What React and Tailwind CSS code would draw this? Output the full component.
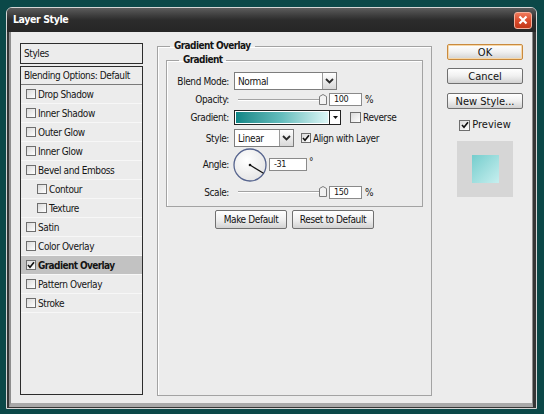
import React from "react";

const font = { fontFamily: '"DejaVu Sans Condensed", "DejaVu Sans", sans-serif' };

const CheckBox = ({ checked }) => (
  <span className="w-[10px] h-[10px] border border-[#6e6e6e] bg-gradient-to-br from-[#dadada] to-white flex items-center justify-center shrink-0">
    {checked && (
      <svg width="8" height="8" viewBox="0 0 8 8">
        <path d="M1 4 L3 6.3 L7 1.2" fill="none" stroke="#111" strokeWidth="1.6" />
      </svg>
    )}
  </span>
);

const Button = ({ children, primary, className = "" }) => (
  <div
    className={`h-[16px] flex items-center justify-center rounded-[2px] border bg-gradient-to-b from-white via-[#f0f0f0] to-[#d2d2d2] text-[10px] text-[#111] leading-none ${
      primary ? "border-[#c98a3e] shadow-[inset_0_0_0_1px_#f6d7a8]" : "border-[#707070]"
    } ${className}`}
  >
    {children}
  </div>
);

const Chevron = () => (
  <svg width="9" height="6" viewBox="0 0 9 6">
    <path d="M1 1 L4.5 4.5 L8 1" fill="none" stroke="#2a2a2a" strokeWidth="1.8" />
  </svg>
);

const Select = ({ value, width }) => (
  <div className={`h-[18px] ${width} flex border border-[#7d7d7d] bg-white`}>
    <span className="flex-1 pl-[3px] flex items-center text-[10px]">{value}</span>
    <span className="w-[14px] border-l border-[#9a9a9a] bg-gradient-to-b from-white to-[#d8d8d8] flex items-center justify-center">
      <Chevron />
    </span>
  </div>
);

// thin track with the small house-shaped thumb
const Slider = () => (
  <svg width="92" height="12" viewBox="0 0 92 12" className="shrink-0">
    <line x1="1" y1="5.5" x2="86" y2="5.5" stroke="#a2a2a2" />
    <line x1="1" y1="6.5" x2="86" y2="6.5" stroke="#ffffff" />
    <path d="M82.5 2.5 L86 0.5 L89.5 2.5 L89.5 10.5 L82.5 10.5 Z" fill="#f2f2f2" stroke="#7a7a7a" />
  </svg>
);

const NumberBox = ({ value, width = "w-[33px]" }) => (
  <span className={`h-[13px] ${width} border border-[#8a8a8a] bg-white flex items-center pl-[4px] text-[9px] leading-none`}>
    {value}
  </span>
);

const Label = ({ children }) => (
  <span className="w-[62px] text-right text-[10px] shrink-0 mr-[5px]">{children}</span>
);

const styleItems = [
  { name: "Drop Shadow" },
  { name: "Inner Shadow" },
  { name: "Outer Glow" },
  { name: "Inner Glow" },
  { name: "Bevel and Emboss" },
  { name: "Contour", sub: true },
  { name: "Texture", sub: true },
  { name: "Satin" },
  { name: "Color Overlay" },
  { name: "Gradient Overlay", active: true },
  { name: "Pattern Overlay" },
  { name: "Stroke" },
];

export default function App() {
  return (
    <div className="w-[544px] h-[414px] bg-[#0b4848] pt-[7px] pl-[6px] text-[#151515] tracking-[-0.4px]" style={font}>
      <div className="w-[531px] h-[402px] border border-[#d6d6d6] rounded-t-[6px] bg-[#363636] flex flex-col overflow-hidden">
        {/* title bar */}
        <div className="h-[24px] shrink-0 flex items-center justify-between pl-[6px] pr-[4px] bg-gradient-to-b from-[#5c5c5c] via-[#2c2c2c] to-[#262626]">
          <span className="text-white font-bold text-[10.5px]">Layer Style</span>
          <span className="w-[18px] h-[17px] rounded-[3px] border border-[#f3b09c] bg-gradient-to-b from-[#f0795a] via-[#d94b2c] to-[#c33818] flex items-center justify-center">
            <svg width="10" height="10" viewBox="0 0 10 10">
              <path d="M1.5 1.5 L8.5 8.5 M8.5 1.5 L1.5 8.5" stroke="#fff" strokeWidth="2.2" />
            </svg>
          </span>
        </div>

        {/* dialog body */}
        <div className="flex-1 ml-[2px] mr-[3px] mb-[1px] border-l-2 border-l-[#8e8e8e] border-r border-r-[#8a8a8a] border-b-4 border-b-[#a9a9a9] bg-[#ececec] flex pl-[9px] pt-[8px]">
          {/* styles list */}
          <div className="w-[123px] mt-[3px] flex flex-col shrink-0">
            <div className="h-[21px] border border-[#2c2c2c] flex items-center pl-[3px] text-[10px]">Styles</div>
            <div className="mt-[2px] h-[329px] border border-[#2c2c2c] flex flex-col">
              <div className="h-[18px] border-b border-[#7a7a7a] flex items-center pl-[3px] text-[10px] whitespace-nowrap">
                Blending Options: Default
              </div>
              {styleItems.map((item) => (
                <div
                  key={item.name}
                  className={`h-[19px] border-b border-[#f7f7f7] flex items-center gap-[2px] text-[10px] whitespace-nowrap ${
                    item.sub ? "pl-[16px]" : "pl-[5px]"
                  } ${item.active ? "bg-[#c2c2c2] font-bold tracking-[-0.6px]" : ""}`}
                >
                  <CheckBox checked={item.active} />
                  <span>{item.name}</span>
                </div>
              ))}
            </div>
          </div>

          {/* settings */}
          <fieldset className="ml-[14px] w-[275px] h-[356px] border border-[#a3a3a3] shadow-[inset_1px_1px_0_#fff] px-[8px] shrink-0">
            <legend className="ml-[4px] px-[4px] text-[10px] leading-[12px] font-bold tracking-[-0.6px]">Gradient Overlay</legend>
            <fieldset className="mt-[2px] border border-[#a3a3a3] shadow-[inset_1px_1px_0_#fff] pt-[6px] pb-[8px]">
              <legend className="ml-[12px] px-[4px] text-[10px] leading-[12px] font-bold tracking-[-0.6px]">Gradient</legend>

              <div className="h-[18px] flex items-center">
                <Label>Blend Mode:</Label>
                <Select value="Normal" width="w-[103px]" />
              </div>

              <div className="h-[13px] mt-[3px] flex items-center">
                <Label>Opacity:</Label>
                <span className="ml-[3px]">
                  <Slider />
                </span>
                <NumberBox value="100" />
                <span className="ml-[3px] text-[10px]">%</span>
              </div>

              <div className="h-[14px] mt-[4px] flex items-center">
                <Label>Gradient:</Label>
                <div className="w-[107px] h-[15px] border border-[#222] bg-white flex">
                  <span className="flex-1 m-[1px] bg-gradient-to-r from-[#0a8686] via-[#64bdbd] to-[#dcf6f6]" />
                  <span className="w-[11px] border-l border-[#222] flex items-center justify-center">
                    <svg width="5" height="3" viewBox="0 0 5 3">
                      <path d="M0 0 L5 0 L2.5 3 Z" fill="#111" />
                    </svg>
                  </span>
                </div>
                <span className="ml-[9px] w-[11px] h-[11px] border border-[#6e6e6e] bg-gradient-to-br from-[#dadada] to-white" />
                <span className="ml-[2px] text-[10px]">Reverse</span>
              </div>

              <div className="h-[18px] mt-[5px] flex items-center">
                <Label>Style:</Label>
                <Select value="Linear" width="w-[60px]" />
                <span className="ml-[7px]">
                  <CheckBox checked />
                </span>
                <span className="ml-[2px] text-[10px]">Align with Layer</span>
              </div>

              <div className="h-[33px] mt-[1px] flex items-center">
                <Label>Angle:</Label>
                <svg width="34" height="34" viewBox="0 0 34 34" className="-ml-[1px]">
                  <defs>
                    <radialGradient id="dial" cx="40%" cy="35%" r="70%">
                      <stop offset="0" stopColor="#ffffff" />
                      <stop offset="1" stopColor="#e4e4e4" />
                    </radialGradient>
                  </defs>
                  <circle cx="17" cy="17" r="16" fill="url(#dial)" stroke="#56648e" strokeWidth="1.3" />
                  <circle cx="17" cy="17" r="1.3" fill="#111" />
                  <line x1="17" y1="17" x2="30.5" y2="25.3" stroke="#111" strokeWidth="1.2" />
                </svg>
                <span className="ml-[2px]">
                  <NumberBox value="-31" width="w-[38px]" />
                </span>
                <span className="ml-[2px] self-start mt-[9px] text-[10px] leading-none">°</span>
              </div>

              <div className="h-[12px] mt-[5px] flex items-center">
                <Label>Scale:</Label>
                <span className="ml-[3px]">
                  <Slider />
                </span>
                <NumberBox value="150" />
                <span className="ml-[3px] text-[10px]">%</span>
              </div>
            </fieldset>

            <div className="mt-[3px] flex justify-center gap-[5px]">
              <Button className="w-[72px] h-[19px]">Make Default</Button>
              <Button className="w-[82px] h-[19px]">Reset to Default</Button>
            </div>
          </fieldset>

          {/* actions */}
          <div className="ml-[15px] w-[76px] mt-[4px] flex flex-col items-center shrink-0 tracking-normal">
            <Button primary className="w-[76px] text-[11px]">OK</Button>
            <Button className="w-[76px] mt-[8px] text-[11px]">Cancel</Button>
            <Button className="w-[76px] mt-[9px] h-[15px] text-[11px]">New Style...</Button>
            <div className="mt-[8px] flex items-center gap-[2px]">
              <span className="w-[11px] h-[11px] border border-[#6e6e6e] bg-gradient-to-br from-[#dadada] to-white flex items-center justify-center">
                <svg width="8" height="8" viewBox="0 0 8 8">
                  <path d="M1 4 L3 6.3 L7 1.2" fill="none" stroke="#111" strokeWidth="1.6" />
                </svg>
              </span>
              <span className="text-[11px]">Preview</span>
            </div>
            <div className="mt-[7px] w-[56px] h-[56px] bg-[#d6d6d6] flex items-center justify-center">
              <span className="w-[27px] h-[28px] bg-gradient-to-br from-[#74cdcd] to-[#c6efef]" />
            </div>
          </div>
        </div>
      </div>
    </div>
  );
}
